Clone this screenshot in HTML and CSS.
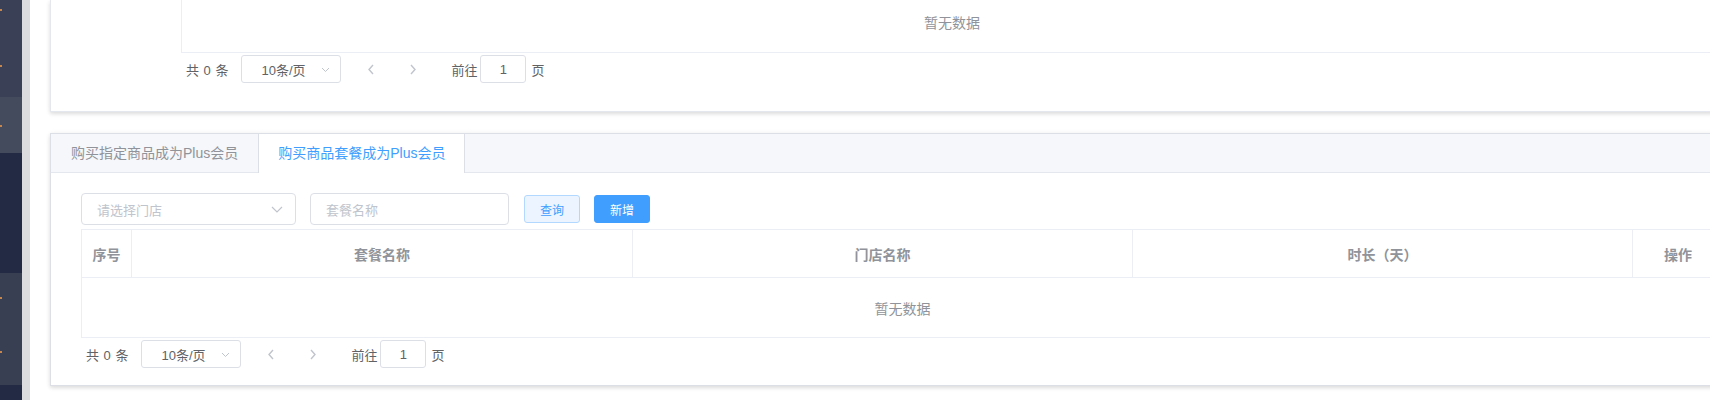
FILE: index.html
```html
<!DOCTYPE html>
<html lang="zh-CN">
<head>
<meta charset="utf-8">
<title>Plus会员</title>
<link rel="stylesheet" href="styles.css">
</head>
<body>
<div class="app">
  <aside class="sidebar">
    <div class="sb sb-a"></div>
    <div class="sb sb-b"></div>
    <div class="sb sb-c"></div>
    <div class="sb sb-d"></div>
    <div class="sb sb-e"></div>
    <span class="dot dot1"></span>
    <span class="dot dot2"></span>
    <span class="dot dot3"></span>
    <span class="dot dot4"></span>
    <span class="dot dot5"></span>
  </aside>
  <div class="gutter"></div>
  <main class="main">
    <section class="card card-top">
      <div class="top-table">
        <div class="top-empty">暂无数据</div>
      </div>
      <div class="pagination">
        <span class="total">共 0 条</span>
        <div class="sizes">
          <span class="sizes-text">10条/页</span>
          <svg class="sizes-arrow" width="9" height="6" viewBox="0 0 9 6"><path d="M1 1l3.5 3.5L8 1" fill="none" stroke="#c0c4cc" stroke-width="1"/></svg>
        </div>
        <button class="pg-btn" type="button"><svg width="8" height="11" viewBox="0 0 8 11"><path d="M6 1L2 5.5 6 10" fill="none" stroke="#c0c4cc" stroke-width="1.4"/></svg></button>
        <button class="pg-btn next" type="button"><svg width="8" height="11" viewBox="0 0 8 11"><path d="M2 1l4 4.5L2 10" fill="none" stroke="#c0c4cc" stroke-width="1.4"/></svg></button>
        <span class="jump">前往<span class="jump-input">1</span>页</span>
      </div>
    </section>

    <section class="card tabs-card">
      <div class="tabs-header">
        <div class="tab">购买指定商品成为Plus会员</div>
        <div class="tab active">购买商品套餐成为Plus会员</div>
      </div>
      <div class="tabs-content">
        <div class="search">
          <div class="field select-field">
            <span class="placeholder">请选择门店</span>
            <svg class="select-arrow" width="12" height="7" viewBox="0 0 12 7"><path d="M1 1l5 5 5-5" fill="none" stroke="#c0c4cc" stroke-width="1.2"/></svg>
          </div>
          <div class="field input-field">
            <span class="placeholder">套餐名称</span>
          </div>
          <button class="btn btn-plain" type="button">查询</button>
          <button class="btn btn-primary" type="button">新增</button>
        </div>
        <table class="table">
          <colgroup>
            <col class="c1"><col class="c2"><col class="c3"><col class="c4"><col class="c5">
          </colgroup>
          <thead>
            <tr>
              <th>序号</th>
              <th>套餐名称</th>
              <th>门店名称</th>
              <th>时长（天）</th>
              <th>操作</th>
            </tr>
          </thead>
          <tbody>
            <tr><td class="empty" colspan="5">暂无数据</td></tr>
          </tbody>
        </table>
        <div class="pagination">
          <span class="total">共 0 条</span>
          <div class="sizes">
            <span class="sizes-text">10条/页</span>
            <svg class="sizes-arrow" width="9" height="6" viewBox="0 0 9 6"><path d="M1 1l3.5 3.5L8 1" fill="none" stroke="#c0c4cc" stroke-width="1"/></svg>
          </div>
          <button class="pg-btn" type="button"><svg width="8" height="11" viewBox="0 0 8 11"><path d="M6 1L2 5.5 6 10" fill="none" stroke="#c0c4cc" stroke-width="1.4"/></svg></button>
          <button class="pg-btn next" type="button"><svg width="8" height="11" viewBox="0 0 8 11"><path d="M2 1l4 4.5L2 10" fill="none" stroke="#c0c4cc" stroke-width="1.4"/></svg></button>
          <span class="jump">前往<span class="jump-input">1</span>页</span>
        </div>
      </div>
    </section>
  </main>
</div>
</body>
</html>
```

FILE: styles.css
```css
* { box-sizing: border-box; }
html, body {
  margin: 0;
  padding: 0;
  background: #fff;
  overflow: hidden;
}
body {
  font-family: "Liberation Sans", "Noto Sans CJK SC", sans-serif;
  font-size: 14px;
  color: #606266;
}
.app {
  display: flex;
  width: 1800px;
  height: 400px;
}
.sidebar {
  position: relative;
  width: 22px;
  flex: none;
  display: flex;
  flex-direction: column;
}
.sb-a { height: 97px; background: #3a4156; }
.sb-b { height: 56px; background: #444b5d; }
.sb-c { height: 120px; background: #232a44; }
.sb-d { height: 112px; background: #383f52; }
.sb-e { flex: 1; background: #232a44; }
.dot {
  position: absolute;
  left: 0;
  width: 2px;
  height: 2px;
  background: #c7864c;
}
.dot1 { top: 9px; }
.dot2 { top: 65px; }
.dot3 { top: 125px; }
.dot4 { top: 297px; }
.dot5 { top: 351px; }
.gutter {
  width: 8px;
  flex: none;
  background: #dcdcde;
}
.main {
  flex: none;
  padding-left: 20px;
}
.card {
  width: 1703px;
  background: #fff;
  border: 1px solid #e4e7ed;
  box-shadow: 0 2px 4px rgba(0,0,0,.12), 0 0 6px rgba(0,0,0,.04);
}
.card-top {
  border-top: none;
  padding: 0 30px 26px 130px;
}
.top-table {
  border-left: 1px solid #ebeef5;
  border-bottom: 1px solid #ebeef5;
}
.top-empty {
  height: 52px;
  padding-bottom: 8px;
  display: flex;
  align-items: center;
  justify-content: center;
  color: #909399;
  font-size: 14px;
}

/* pagination */
.pagination {
  display: flex;
  align-items: center;
  padding: 2px 5px;
  height: 32px;
  font-size: 13px;
  color: #606266;
}
.total { margin-right: 13px; white-space: pre; word-spacing: 1px; }
.sizes {
  position: relative;
  width: 100px;
  height: 28px;
  border: 1px solid #dcdfe6;
  border-radius: 3px;
  margin-right: 12px;
  display: flex;
  align-items: center;
  justify-content: center;
  padding: 0 30px 0 14px;
}
.sizes-text { color: #606266; }
.sizes-arrow {
  position: absolute;
  right: 10px;
  top: 11px;
}
.pg-btn {
  width: 36px;
  height: 28px;
  padding: 0;
  border: none;
  background: #fff;
  display: flex;
  align-items: center;
  justify-content: center;
}
.pg-btn.next { margin-left: 6px; }
.jump {
  margin-left: 20px;
  display: flex;
  align-items: center;
  color: #606266;
}
.jump-input {
  width: 46px;
  height: 28px;
  margin: 0 5px 0 3px;
  border: 1px solid #dcdfe6;
  border-radius: 3px;
  display: flex;
  align-items: center;
  justify-content: center;
}

/* tabs card */
.tabs-card {
  margin-top: 21px;
  border-color: #dcdfe6;
}
.tabs-header {
  display: flex;
  align-items: flex-start;
  height: 39px;
  background: #f5f7fa;
  border-bottom: 1px solid #e4e7ed;
}
.tab {
  height: 39px;
  line-height: 38px;
  padding: 0 20px;
  font-size: 14px;
  color: #909399;
  margin-bottom: -1px;
  border-left: 1px solid transparent;
  border-right: 1px solid transparent;
}
.tab:first-child { border-left: none; padding-right: 19px; }
.tab.active {
  padding: 0 19px;
  color: #409eff;
  background: #fff;
  border-left-color: #dcdfe6;
  border-right-color: #dcdfe6;
}
.tabs-content {
  padding: 20px 30px 15px 30px;
}
.search {
  display: flex;
  align-items: center;
  height: 32px;
  margin-bottom: 4px;
}
.field {
  position: relative;
  height: 32px;
  border: 1px solid #dcdfe6;
  border-radius: 4px;
  display: flex;
  align-items: center;
  padding-left: 15px;
  font-size: 13px;
}
.select-field { width: 215px; }
.input-field { width: 199px; margin-left: 14px; }
.placeholder { color: #c0c4cc; }
.select-arrow {
  position: absolute;
  right: 12px;
  top: 12px;
}
.btn {
  width: 56px;
  height: 28px;
  border-radius: 3px;
  font-family: inherit;
  font-size: 12px;
  padding: 0;
  border: 1px solid;
}
.btn-plain {
  margin-left: 15px;
  color: #409eff;
  background: #ecf5ff;
  border-color: #b3d8ff;
}
.btn-primary {
  margin-left: 14px;
  color: #fff;
  background: #409eff;
  border-color: #409eff;
}

/* table */
.table {
  width: 1642px;
  border-collapse: collapse;
  table-layout: fixed;
  border: 1px solid #ebeef5;
}
.c1 { width: 50px; }
.c2 { width: 501px; }
.c3 { width: 500px; }
.c4 { width: 500px; }
.c5 { width: 91px; }
.table th {
  height: 48px;
  padding: 0;
  border: 1px solid #ebeef5;
  color: #909399;
  font-size: 14px;
  font-weight: bold;
  text-align: center;
}
.table td.empty {
  height: 60px;
  padding: 0;
  text-align: center;
  color: #909399;
  font-size: 14px;
  border: 1px solid #ebeef5;
}
```
